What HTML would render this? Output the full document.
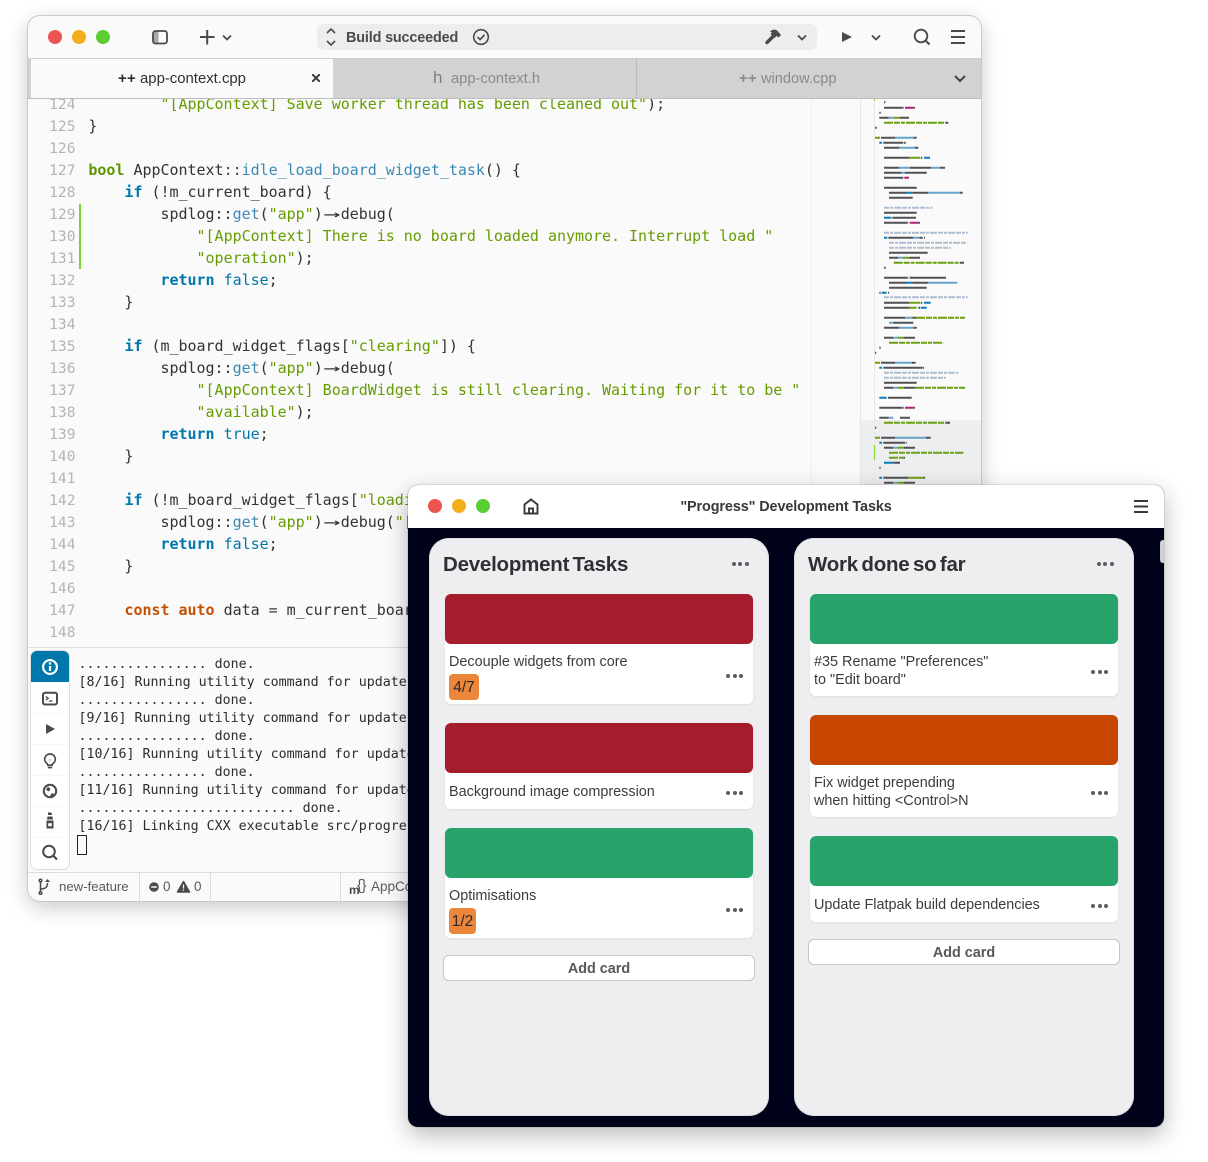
<!DOCTYPE html>
<html lang="en"><head><meta charset="utf-8"><title>Progress</title>
<style>
*{box-sizing:border-box}
html,body{margin:0;padding:0;width:1208px;height:1162px;background:#fff;overflow:hidden;font-family:"Liberation Sans",sans-serif}
.a{position:absolute;white-space:pre}
#w1{position:absolute;left:28px;top:16px;width:953px;height:885px;background:#fafafa;border-radius:12px;overflow:hidden;box-shadow:0 0 0 1px #c9c9c9,0 6px 22px rgba(0,0,0,.22)}
#w2{position:absolute;left:408px;top:485px;width:756px;height:642px;background:#00021a;border-radius:10px;overflow:hidden;box-shadow:0 0 0 1px rgba(0,0,0,.08),0 8px 24px rgba(0,0,0,.28)}
.dot{position:absolute;width:14px;height:14px;border-radius:50%}
.r{background:#ed5350}.y{background:#f4ae1b}.g{background:#59cd33}
.code{position:absolute;left:0;height:22px;font:15px/22px "DejaVu Sans Mono",monospace;letter-spacing:-.02px;white-space:pre;color:#333}
.n{position:absolute;left:20px;width:27.5px;margin-top:1px;text-align:right;font:14.6px/22px "DejaVu Sans Mono",monospace;color:#b4b4b4}
.s{color:#669c00}.k{color:#0077aa;font-weight:700}.b{color:#0077aa}.f{color:#3d8ab5}.o{color:#c75000;font-weight:700}.t{color:#5f9400;font-weight:700}
.ar{display:inline-block;width:18px;text-align:center;transform:scaleX(1.9)}
.term{position:absolute;left:50.5px;font:13.3px/18px "DejaVu Sans Mono",monospace;letter-spacing:0;color:#2c2c2c;white-space:pre}
.col{position:absolute;top:53px;width:340px;height:578px;background:#eeeef0;border-radius:20px;box-shadow:inset 0 0 0 1px #dcdce0}
.h{position:absolute;left:14px;top:14px;font-size:20.5px;font-weight:700;color:#303034;line-height:26px;letter-spacing:-.23px;word-spacing:-2px;white-space:pre}
.card{position:absolute;left:16px;width:308px;background:#fff;border-radius:6px;box-shadow:0 1px 2px rgba(0,0,0,.07)}
.img{height:50px;border-radius:6px}
.tx{position:absolute;left:4px;font-size:14.42px;line-height:18px;color:#3c3c40;white-space:pre}
.badge{position:absolute;left:4px;background:#ec863a;border-radius:4px;height:26px;font-size:15.5px;line-height:27px;text-align:center;color:#2a2a2a}
.add{position:absolute;left:14px;width:312px;height:26px;background:#fff;border:1px solid #c8c8cb;border-radius:6px;text-align:center;font-size:14.4px;font-weight:700;line-height:26px;color:#58585c}
.m{position:absolute;width:18px;height:6px}
.m i{position:absolute;top:0;width:4px;height:4px;border-radius:50%;background:#5c5c60}
.m i:nth-child(1){left:0}.m i:nth-child(2){left:6.5px}.m i:nth-child(3){left:13px}
</style></head><body>

<div id="w1">
 <!-- toolbar -->
 <div class="dot r" style="left:20px;top:14px"></div><div class="dot y" style="left:44px;top:14px"></div><div class="dot g" style="left:68px;top:14px"></div>
 <svg class="a" style="left:0;top:0" width="953" height="42" fill="none" stroke="#4a4a4e" stroke-width="1.8">
  <rect x="125" y="15" width="14" height="12.5" rx="2.5"/><rect x="125.5" y="15.5" width="5" height="11.5" fill="#4a4a4e" fill-opacity=".45" stroke="none"/>
  <path d="M172 21h14.5M179.2 14v14.5" stroke-width="2"/><path d="M195 19.500l4 4 4-4" stroke-width="1.700"/>
 </svg>
 <div class="a" style="left:289px;top:8px;width:500px;height:26px;border-radius:6px;background:#ededed"></div>
 <svg class="a" style="left:0;top:0" width="953" height="42" fill="none" stroke="#4a4a4e" stroke-width="1.6">
  <path d="M299 17l4-4 4 4M299 25l4 4 4-4"/>
  <circle cx="453" cy="21" r="7.300"/><path d="M449.500 21l2.600 2.600 4.400-4.800"/>
  <path d="M770 19.500l4 4 4-4M844 19.500l4 4 4-4" stroke-width="1.800"/>
  <path d="M739 26.500l7.500-7.500" stroke-width="3.400" stroke-linecap="round"/><path d="M742 15.500c3-2.500 6-2.500 8 0l3 3.500-2.500 2.500-2-1.500-2 2-4-4 1.500-1.500z" fill="#4a4a4e" stroke="none"/>
  <path d="M814 16l10 5-10 5z" fill="#4a4a4e" stroke="none"/>
  <circle cx="893" cy="20" r="6.300" stroke-width="1.900"/><path d="M897.500 24.500l4 4" stroke-width="2"/>
  <path d="M923 15h14M923 21h14M923 27h14" stroke-width="2"/>
 </svg>
 <div class="a" style="left:318px;top:13px;font-size:14.400px;font-weight:700;line-height:18px;color:#4a4a4e;letter-spacing:-.15px">Build succeeded</div>

 <!-- tabs -->
 <div class="a" style="left:0;top:42px;width:953px;height:41px;background:#d2d2d2;border-top:1px solid #cdcdcd;border-bottom:1px solid #bdbdbd"></div>
 <div class="a" style="left:3px;top:43px;width:302px;height:39px;background:#fafafa"></div>
 <div class="a" style="left:608px;top:43px;width:1px;height:39px;background:#bcbcbc"></div>
 <div class="a" style="left:90px;top:53px;font-size:15px;font-weight:700;line-height:20px;color:#2e2e2e;letter-spacing:.2px">++</div>
 <div class="a" style="left:112px;top:53px;font-size:14.900px;line-height:20px;color:#303030">app-context.cpp</div>
 <svg class="a" style="left:284px;top:58px" width="8" height="8" stroke="#3c3c3c" stroke-width="2"><path d="M0 0l8 8M8 0l-8 8"/></svg>
 <div class="a" style="left:405px;top:52px;font-size:17px;font-weight:400;line-height:20px;color:#7d7d7d">h</div>
 <div class="a" style="left:423px;top:53px;font-size:14.700px;line-height:20px;color:#8a8a8a">app-context.h</div>
 <div class="a" style="left:711px;top:53px;font-size:15px;font-weight:700;line-height:20px;color:#8a8a8a;letter-spacing:.2px">++</div>
 <div class="a" style="left:733px;top:53px;font-size:14.600px;line-height:20px;color:#8a8a8a">window.cpp</div>
 <svg class="a" style="left:926px;top:59px" width="12" height="8" fill="none" stroke="#444" stroke-width="2"><path d="M1 1l5 5 5-5"/></svg>

 <!-- code -->
 <div class="a" style="left:0;top:83px;width:953px;height:548px;overflow:hidden">
  <div class="a" style="left:783px;top:0;width:1px;height:548px;background:#eeeeee"></div>
  <div class="a" style="left:832px;top:0;width:1px;height:548px;background:#e6e6e6"></div>
  <div class="a" style="left:51px;top:105px;width:2px;height:65px;background:#7ed133"></div>
  <div class="n" style="top:-6px">124</div><div class="code" style="left:60.400px;top:-6px">        <span class="s">"[AppContext] Save worker thread has been cleaned out"</span>);</div>
  <div class="n" style="top:16px">125</div><div class="code" style="left:60.400px;top:16px">}</div>
  <div class="n" style="top:38px">126</div>
  <div class="n" style="top:60px">127</div><div class="code" style="left:60.400px;top:60px"><span class="t">bool</span> AppContext<span style="color:#444">::</span><span class="f">idle_load_board_widget_task</span>() {</div>
  <div class="n" style="top:82px">128</div><div class="code" style="left:60.400px;top:82px">    <span class="k">if</span> (!m_current_board) {</div>
  <div class="n" style="top:104px">129</div><div class="code" style="left:60.400px;top:104px">        spdlog::<span class="f">get</span>(<span class="s">"app"</span>)<span class="ar">→</span>debug(</div>
  <div class="n" style="top:126px">130</div><div class="code" style="left:60.400px;top:126px">            <span class="s">"[AppContext] There is no board loaded anymore. Interrupt load "</span></div>
  <div class="n" style="top:148px">131</div><div class="code" style="left:60.400px;top:148px">            <span class="s">"operation"</span>);</div>
  <div class="n" style="top:170px">132</div><div class="code" style="left:60.400px;top:170px">        <span class="k">return</span> <span class="b">false</span>;</div>
  <div class="n" style="top:192px">133</div><div class="code" style="left:60.400px;top:192px">    }</div>
  <div class="n" style="top:214px">134</div>
  <div class="n" style="top:236px">135</div><div class="code" style="left:60.400px;top:236px">    <span class="k">if</span> (m_board_widget_flags[<span class="s">"clearing"</span>]) {</div>
  <div class="n" style="top:258px">136</div><div class="code" style="left:60.400px;top:258px">        spdlog::<span class="f">get</span>(<span class="s">"app"</span>)<span class="ar">→</span>debug(</div>
  <div class="n" style="top:280px">137</div><div class="code" style="left:60.400px;top:280px">            <span class="s">"[AppContext] BoardWidget is still clearing. Waiting for it to be "</span></div>
  <div class="n" style="top:302px">138</div><div class="code" style="left:60.400px;top:302px">            <span class="s">"available"</span>);</div>
  <div class="n" style="top:324px">139</div><div class="code" style="left:60.400px;top:324px">        <span class="k">return</span> <span class="b">true</span>;</div>
  <div class="n" style="top:346px">140</div><div class="code" style="left:60.400px;top:346px">    }</div>
  <div class="n" style="top:368px">141</div>
  <div class="n" style="top:390px">142</div><div class="code" style="left:60.400px;top:390px">    <span class="k">if</span> (!m_board_widget_flags[<span class="s">"loading"</span>]) {</div>
  <div class="n" style="top:412px">143</div><div class="code" style="left:60.400px;top:412px">        spdlog::<span class="f">get</span>(<span class="s">"app"</span>)<span class="ar">→</span>debug(<span class="s">"[AppContext]"</span></div>
  <div class="n" style="top:434px">144</div><div class="code" style="left:60.400px;top:434px">        <span class="k">return</span> <span class="b">false</span>;</div>
  <div class="n" style="top:456px">145</div><div class="code" style="left:60.400px;top:456px">    }</div>
  <div class="n" style="top:478px">146</div>
  <div class="n" style="top:500px">147</div><div class="code" style="left:60.400px;top:500px">    <span class="o">const</span> <span class="o">auto</span> data = m_current_board;</div>
  <div class="n" style="top:522px">148</div>
  <!-- minimap -->
  <div class="a" style="left:833px;top:321px;width:120px;height:70px;background:#edeef0"></div>
  <svg class="a" style="left:832px;top:0" width="121" height="391" viewBox="860 99 121 391" fill="none" stroke-width="2">
   <path d="M874.500 99V490" stroke="#e8e8e8" stroke-width="1"/>
   <path d="M874.500 99v2" stroke="#7ed133" stroke-width="1"/>
   <path d="M874.500 445v15" stroke="#8ad33a" stroke-width="1.200"/>
   <g style="filter:blur(.25px)">
   <g stroke="#3e3e42" stroke-opacity=".9">
    <path d="M884 102.300h1.300M884 107.700h18.700M903.300 107.700h.7M913.300 107.700h1.700M879.300 112.700h1.400M879.300 117.700h9.400M900 117.700h9M946 122.700h2.300M875 127.700h1.700M881 137.700h14M913.300 137.700h3.400M883.300 142.700h20M904 142.700h1.700M884 147.700h15.300M915 147.700h3.300M884 157.700h25M920.700 157.700h1.600M884 167.700h15.300M910 167.700h21M940 167.700h5M884 172.700h17.700M905 172.700h21.700M884 177.700h19.300M884 187.700h32.700M889 192.700h17M912.300 192.700h16M960 192.700h2.700M889 197.700h23.700M884 212.700h32.700M892.300 217.700h23.700M884 222.700h23.700M908.700 222.700h.6M918.300 222.700h1.700M888.300 237.700h25M919.300 237.700h3.400M924 237.700h1M889 252.700h38.700M889 257.700h9M909.300 257.700h10.700M960 262.700h4M884 267.700h1.700M884 277.700h23.700M908.700 277.700h.6M910 277.700h36M889 282.700h17M912.300 282.700h16M889 287.700h37.700M879.300 292.700h1.400M888 292.700h1M884 302.700h25M920.700 302.700h1.600M884 307.700h25M918.300 307.700h1.700M884 317.700h21M912.300 317.700h3.700M893.300 322.700h20M884 327.700h15.300M913.300 327.700h3.400M884 337.700h9.300M904 337.700h11M879.300 347.700h1.400M875 352.700h1.300M881 362.700h14M911.700 362.700h4M883.300 367.700h39M922.700 367.700h1.300M884 382.700h32.700M884 387.700h9.300M904 387.700h11M888 397.700h23.700M879.300 407.700h23.400M903.300 407.700h.7M913.300 407.700h1.700M879.300 417.700h9.400M900 417.700h10M946 422.700h4M875 427.700h1.300M881 437.700h14M926 437.700h4.700M883.300 442.700h21.700M905.700 442.700h1M884 447.700h9.300M904 447.700h11M903.300 457.700h1.700M893.300 462.700h6.700M879.300 467.700h1.400M883.300 477.700h25M923.300 477.700h1.700M884 482.700h9.300M904 482.700h11"/>
   </g>
   <g stroke="#6ba012">
    <path d="M893.300 117.700h6.700M875 137.700h5M909 157.700h11M902.700 257.700h6.600M909 302.700h11M909 307.700h7.700M898 337.700h6M875 362.700h5M898 387.700h6M875 437.700h5M898 447.700h6M908.300 477.700h15M898 482.700h6"/>
    <path d="M884 122.700h62M893.700 262.700h66.300M916 317.700h49M889 342.700h54.300M915 387.700h50M884 422.700h62M889 452.700h74.300M889 457.700h14.300" stroke-dasharray="9 1 6 1 4 1"/>
   </g>
   <g stroke="#66a4cc">
    <path d="M888.700 117.700h4.600M895 137.700h18.300M899.300 147.700h15.700M899.300 167.700h10.700M931 167.700h9M901.700 172.700h3.300M928.300 192.700h31.700M913.300 237.700h6M898 257.700h4.700M928.300 282.700h29M905 317.700h7.300M889 322.700h4.300M899.300 327.700h14M893.300 337.700h4.700M895 362.700h16.700M893.300 387.700h4.700M888.700 417.700h4.600M895 437.700h31M893.300 447.700h4.700M893.300 482.700h4.700"/>
   </g>
   <g stroke="#0a7cb5">
    <path d="M879.300 142.700h2.700M924 157.700h6M906 192.700h6.300M884 217.700h7.300M884 237.700h3.300M906 282.700h6.300M881.700 292.700h5M924 302.700h6.700M920.700 307.700h6M879.300 367.700h2.700M879.300 397.700h7.400M879.300 442.700h2.700M884 462.700h9.300M879.300 477.700h2.700"/>
   </g>
   <g stroke="#b81d78">
    <path d="M905 107.700h8.300M904.300 177.700h4.700M910 222.700h8.300M905 407.700h8.300"/>
   </g>
   <g stroke="#aebdcf" stroke-dasharray="5 1 3 1 7 1">
    <path d="M884 207.700h48.300M884 232.700h83.700M889 242.700h78.300M889 247.700h61.700M884 297.300h83.700M884 372.700h74.300M884 377.700h62"/>
   </g>
   </g>
  </svg>
 </div>

 <!-- terminal panel -->
 <div class="a" style="left:0;top:631px;width:953px;height:226px;background:#fafafa;border-top:1px solid #dedede"></div>
 <div class="a" style="left:3px;top:635px;width:38px;height:218px;background:#fff;border-radius:6px;box-shadow:0 0 0 1px #dcdcdc;overflow:hidden">
  <div class="a" style="left:0;top:0;width:38px;height:31px;background:#0077aa"></div>
  <div class="a" style="left:0;top:62px;width:38px;height:1px;background:#f7f7f7"></div>
  <div class="a" style="left:0;top:93px;width:38px;height:1px;background:#f7f7f7"></div>
  <div class="a" style="left:0;top:124px;width:38px;height:1px;background:#f7f7f7"></div>
  <div class="a" style="left:0;top:155px;width:38px;height:1px;background:#f7f7f7"></div>
  <div class="a" style="left:0;top:186px;width:38px;height:1px;background:#f7f7f7"></div>
 </div>
 <svg class="a" style="left:0;top:631px" width="42" height="226" fill="none" stroke="#4a4a4e" stroke-width="1.700">
  <circle cx="22" cy="20" r="6.900" stroke="#fff" stroke-width="2.200"/><path d="M22 19v5" stroke="#fff" stroke-width="2.200"/><circle cx="22" cy="16.500" r="1.250" fill="#fff" stroke="none"/>
  <rect x="15" y="45.700" width="14" height="11.800" rx="2" stroke-width="2"/><path d="M17.800 49.500l2.400 1.800-2.400 1.800M21 54h3.500" stroke-width="1.300"/>
  <path d="M18 77l9 5-9 5z" fill="#4a4a4e" stroke="none"/>
  <path d="M22 107a5.200 5.200 0 0 0-3 9.500c.6.500.8 1 .8 1.700h4.400c0-.7.200-1.200.8-1.700A5.200 5.200 0 0 0 22 107zM19.800 120.500h4.400"/><path d="M20 112.500l2 1.500 2-1.500z" fill="#b8b8b8" stroke="none"/>
  <circle cx="22" cy="144" r="6.200" stroke-width="2"/><path d="M20 139.500l-2 3.500 3 1.500 1.500-2.500zM24 146l2.500 1.500-2 3-2.500-1.500z" fill="#4a4a4e" stroke="none"/>
  <path d="M19.500 169.500h5l.5 3h-6zM20 165.500h3.500l.5 2.500h-4zM18.500 173.500h7v8h-7z" fill="#4a4a4e" stroke="none"/><path d="M20.200 176.200h3.600v3h-3.600z" fill="#fff" stroke="none"/>
  <circle cx="21" cy="204.500" r="5.800" stroke-width="2"/><path d="M25.500 209l3.500 3.500" stroke-width="2.200"/>
 </svg>
 <div class="term" style="top:638px"><span style="position:relative;top:2px">................ done.
[8/16] Running utility command for update-
................ done.
[9/16] Running utility command for update-
................ done.
[10/16] Running utility command for update
................ done.
[11/16] Running utility command for update
........................... done.
[16/16] Linking CXX executable src/progres</span></div>
 <div class="a" style="left:49px;top:818.500px;width:10px;height:20px;border:1px solid #222"></div>

 <!-- status bar -->
 <div class="a" style="left:0;top:856px;width:953px;height:29px;background:#fafafa;border-top:1px solid #dcdcdc"></div>
 <div class="a" style="left:111px;top:857px;width:1px;height:28px;background:#dcdcdc"></div>
 <div class="a" style="left:182px;top:857px;width:1px;height:28px;background:#dcdcdc"></div>
 <div class="a" style="left:312px;top:857px;width:1px;height:28px;background:#dcdcdc"></div>
 <svg class="a" style="left:0;top:857px" width="200" height="28" fill="none" stroke="#4a4a4e" stroke-width="1.500">
  <circle cx="12.500" cy="7.500" r="1.300"/><circle cx="12.500" cy="20" r="1.300"/><path d="M12.500 9v9.500M12.500 16c4 0 7-1 7-6"/><path d="M17 9l2.500-3 2.500 3z" fill="#4a4a4e" stroke="none"/>
  <circle cx="126" cy="14" r="4.800" fill="#4a4a4e" stroke="none"/><path d="M123.200 14h5.600" stroke="#fafafa" stroke-width="1.500"/>
  <path d="M155.500 8.500l6 10.500h-12z" fill="#4a4a4e" stroke="#4a4a4e" stroke-linejoin="round"/><path d="M155.500 11.500v4M155.500 16.500v1.200" stroke="#fafafa" stroke-width="1.200"/>
 </svg>
 <div class="a" style="left:31px;top:863px;font-size:13.200px;line-height:16px;color:#5a5a5e">new-feature</div>
 <div class="a" style="left:135px;top:863px;font-size:13.500px;line-height:16px;color:#5a5a5e">0</div>
 <div class="a" style="left:166px;top:863px;font-size:13.500px;line-height:16px;color:#5a5a5e">0</div>
 <div class="a" style="left:321px;top:867px;font-size:12px;font-weight:700;line-height:14px;color:#4a4a4e">m</div>
 <div class="a" style="left:329px;top:861px;font-size:15px;line-height:18px;color:#5a5a5e;letter-spacing:-.5px">{}</div>
 <div class="a" style="left:343px;top:863px;font-size:13.500px;line-height:16px;color:#5a5a5e">AppContext</div>
</div>

<div id="w2">
 <div class="a" style="left:0;top:0;width:756px;height:43px;background:#fff"></div>
 <div class="dot r" style="left:20px;top:14px"></div><div class="dot y" style="left:44px;top:14px"></div><div class="dot g" style="left:68px;top:14px"></div>
 <svg class="a" style="left:115px;top:13px" width="16" height="17" fill="none" stroke="#38383c" stroke-width="1.900"><path d="M1.500 15.500V6.500L8 1.500l6.500 5v9zM6 15.500v-5h4v5"/></svg>
 <div class="a" style="left:0;top:13px;width:756px;text-align:center;font-size:14.400px;font-weight:700;line-height:18px;color:#38383c;letter-spacing:-.1px">"Progress" Development Tasks</div>
 <svg class="a" style="left:726px;top:15px" width="14" height="13" stroke="#38383c" stroke-width="2"><path d="M0 1h14M0 6.500h14M0 12h14"/></svg>
 <div class="a" style="left:752px;top:55px;width:4px;height:23px;background:#cfcfd2;border-radius:3px 0 0 3px"></div>

 <div class="col" style="left:21px">
  <div class="h">Development Tasks</div>
  <div class="m" style="left:302.500px;top:24px"><i></i><i></i><i></i></div>
  <div class="card" style="top:56px;height:110px"><div class="img" style="background:#a51c2d"></div>
   <div class="tx" style="top:59px">Decouple widgets from core</div>
   <div class="badge" style="top:80px;width:30px">4/7</div>
   <div class="m" style="left:281px;top:80px"><i></i><i></i><i></i></div></div>
  <div class="card" style="top:185px;height:86px"><div class="img" style="background:#a51c2d"></div>
   <div class="tx" style="top:60px">Background image compression</div>
   <div class="m" style="left:281px;top:68px"><i></i><i></i><i></i></div></div>
  <div class="card" style="top:290px;height:110px"><div class="img" style="background:#28a46b"></div>
   <div class="tx" style="top:59px">Optimisations</div>
   <div class="badge" style="top:80px;width:27px">1/2</div>
   <div class="m" style="left:281px;top:80px"><i></i><i></i><i></i></div></div>
  <div class="add" style="top:417px">Add card</div>
 </div>

 <div class="col" style="left:386px">
  <div class="h">Work done so far</div>
  <div class="m" style="left:302.500px;top:24px"><i></i><i></i><i></i></div>
  <div class="card" style="top:56px;height:102px"><div class="img" style="background:#28a46b"></div>
   <div class="tx" style="top:59px">#35 Rename "Preferences"
to "Edit board"</div>
   <div class="m" style="left:281px;top:76px"><i></i><i></i><i></i></div></div>
  <div class="card" style="top:177px;height:102px"><div class="img" style="background:#c64600"></div>
   <div class="tx" style="top:59px">Fix widget prepending
when hitting &lt;Control&gt;N</div>
   <div class="m" style="left:281px;top:76px"><i></i><i></i><i></i></div></div>
  <div class="card" style="top:298px;height:86px"><div class="img" style="background:#28a46b"></div>
   <div class="tx" style="top:60px">Update Flatpak build dependencies</div>
   <div class="m" style="left:281px;top:68px"><i></i><i></i><i></i></div></div>
  <div class="add" style="top:401px">Add card</div>
 </div>
</div>
</body></html>
